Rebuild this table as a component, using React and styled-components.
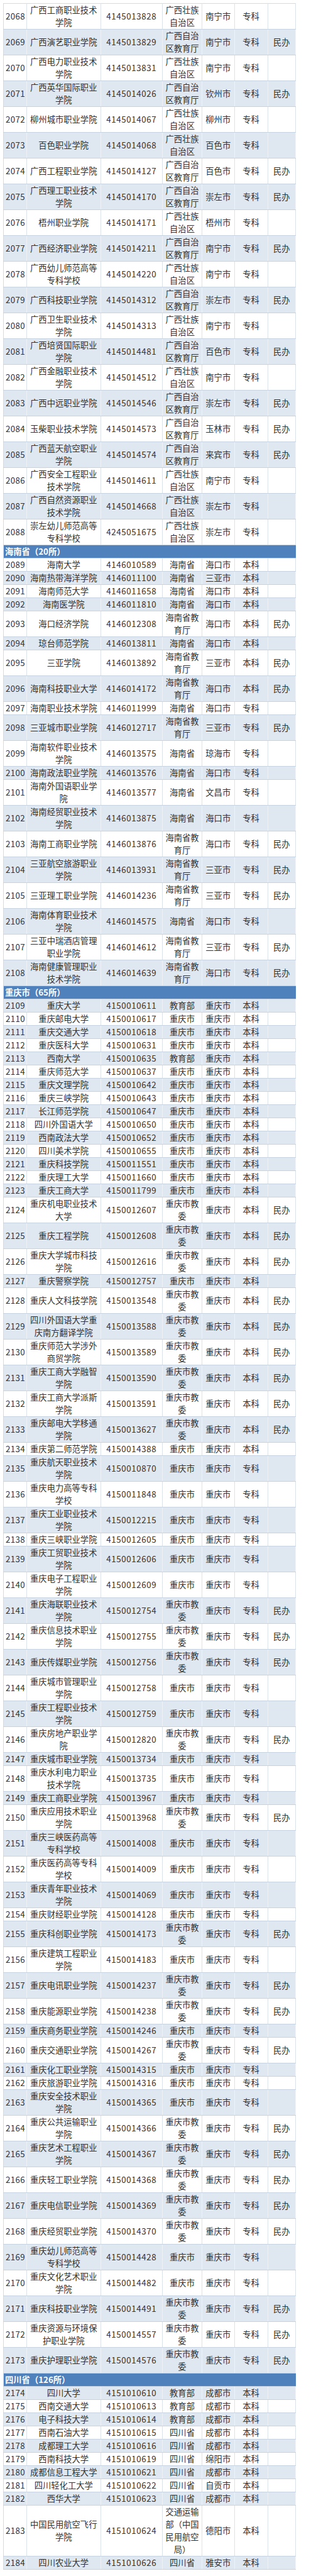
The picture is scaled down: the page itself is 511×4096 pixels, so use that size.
import React from 'react';
import styled, { createGlobalStyle } from 'styled-components';

const GlobalStyle = createGlobalStyle`
  body {
    margin: 0;
    background: #fff;
    font-family: "Noto Sans CJK SC", "Noto Sans", sans-serif;
  }
`

const Page = styled.div`
  padding: 5px 0 0 5px;
`

const Table = styled.table`
  border-collapse: collapse;
  table-layout: fixed;
  width: 465px;
  font-size: 13.3px;
  line-height: 20px;
  color: #333;
  border-top: 1px solid #d3dbe5;
  border-left: 1px solid #d3dbe5;
`

const Col = styled.col`
  width: ${p => p.$w}px;
`

const Row = styled.tr`
  background: #fff;

  &:nth-child(even) {
    background: #dfe7f1;
  }

  & > td {
    border-bottom: 1px solid #c7d3e1;
    border-right: 1px solid #dce2e9;
  }

  &:nth-child(even) > td {
    border-right-color: #eef2f7;
  }
`

const Cell = styled.td`
  padding: 0 4px;
  text-align: center;
  vertical-align: middle;
  letter-spacing: ${p => (p.$num ? '0.6px' : '0')};
`

const IndexCell = styled(Cell)`
  text-align: left;
  padding: 0 0 0 3px;
  letter-spacing: 0.4px;
`

const SectionRow = styled.tr`
  & > td {
    background: #4f81bd;
    color: #fff;
    font-weight: bold;
    text-align: left;
    padding: 0 0 0 2px;
    border-bottom: 1px solid #c7d3e1;
  }
`

const GX = '广西壮族自治区'
const GXJ = '广西自治区教育厅'
const HN = '海南省'
const HNJ = '海南省教育厅'
const CQ = '重庆市'
const CQJ = '重庆市教委'
const SC = '四川省'
const JYB = '教育部'

const sections = [
  {
    title: null,
    rows: [
      ['2068', '广西工商职业技术学院', '4145013828', GX, '南宁市', '专科', ''],
      ['2069', '广西演艺职业学院', '4145013829', GXJ, '南宁市', '专科', '民办'],
      ['2070', '广西电力职业技术学院', '4145013831', GX, '南宁市', '专科', ''],
      ['2071', '广西英华国际职业学院', '4145014026', GXJ, '钦州市', '专科', '民办'],
      ['2072', '柳州城市职业学院', '4145014067', GX, '柳州市', '专科', ''],
      ['2073', '百色职业学院', '4145014068', GX, '百色市', '专科', ''],
      ['2074', '广西工程职业学院', '4145014127', GXJ, '百色市', '专科', '民办'],
      ['2075', '广西理工职业技术学院', '4145014170', GXJ, '崇左市', '专科', '民办'],
      ['2076', '梧州职业学院', '4145014171', GX, '梧州市', '专科', ''],
      ['2077', '广西经济职业学院', '4145014211', GXJ, '南宁市', '专科', '民办'],
      ['2078', '广西幼儿师范高等专科学校', '4145014220', GX, '南宁市', '专科', ''],
      ['2079', '广西科技职业学院', '4145014312', GXJ, '崇左市', '专科', '民办'],
      ['2080', '广西卫生职业技术学院', '4145014313', GX, '南宁市', '专科', ''],
      ['2081', '广西培贤国际职业学院', '4145014481', GXJ, '百色市', '专科', '民办'],
      ['2082', '广西金融职业技术学院', '4145014512', GX, '南宁市', '专科', ''],
      ['2083', '广西中远职业学院', '4145014546', GXJ, '崇左市', '专科', '民办'],
      ['2084', '玉柴职业技术学院', '4145014573', GXJ, '玉林市', '专科', '民办'],
      ['2085', '广西蓝天航空职业学院', '4145014574', GXJ, '来宾市', '专科', '民办'],
      ['2086', '广西安全工程职业技术学院', '4145014611', GX, '南宁市', '专科', ''],
      ['2087', '广西自然资源职业技术学院', '4145014668', GX, '崇左市', '专科', ''],
      ['2088', '崇左幼儿师范高等专科学校', '4245051675', GX, '崇左市', '专科', ''],
    ],
  },
  {
    title: '海南省（20所）',
    rows: [
      ['2089', '海南大学', '4146010589', HN, '海口市', '本科', ''],
      ['2090', '海南热带海洋学院', '4146011100', HN, '三亚市', '本科', ''],
      ['2091', '海南师范大学', '4146011658', HN, '海口市', '本科', ''],
      ['2092', '海南医学院', '4146011810', HN, '海口市', '本科', ''],
      ['2093', '海口经济学院', '4146012308', HNJ, '海口市', '本科', '民办'],
      ['2094', '琼台师范学院', '4146013811', HN, '海口市', '本科', ''],
      ['2095', '三亚学院', '4146013892', HNJ, '三亚市', '本科', '民办'],
      ['2096', '海南科技职业大学', '4146014172', HNJ, '海口市', '本科', '民办'],
      ['2097', '海南职业技术学院', '4146011999', HN, '海口市', '专科', ''],
      ['2098', '三亚城市职业学院', '4146012717', HNJ, '三亚市', '专科', '民办'],
      ['2099', '海南软件职业技术学院', '4146013575', HN, '琼海市', '专科', ''],
      ['2100', '海南政法职业学院', '4146013576', HN, '海口市', '专科', ''],
      ['2101', '海南外国语职业学院', '4146013577', HN, '文昌市', '专科', ''],
      ['2102', '海南经贸职业技术学院', '4146013875', HN, '海口市', '专科', ''],
      ['2103', '海南工商职业学院', '4146013876', HNJ, '海口市', '专科', '民办'],
      ['2104', '三亚航空旅游职业学院', '4146013931', HNJ, '三亚市', '专科', '民办'],
      ['2105', '三亚理工职业学院', '4146014236', HNJ, '三亚市', '专科', '民办'],
      ['2106', '海南体育职业技术学院', '4146014575', HN, '海口市', '专科', ''],
      ['2107', '三亚中瑞酒店管理职业学院', '4146014612', HNJ, '三亚市', '专科', '民办'],
      ['2108', '海南健康管理职业技术学院', '4146014639', HNJ, '海口市', '专科', '民办'],
    ],
  },
  {
    title: '重庆市（65所）',
    rows: [
      ['2109', '重庆大学', '4150010611', JYB, CQ, '本科', ''],
      ['2110', '重庆邮电大学', '4150010617', CQ, CQ, '本科', ''],
      ['2111', '重庆交通大学', '4150010618', CQ, CQ, '本科', ''],
      ['2112', '重庆医科大学', '4150010631', CQ, CQ, '本科', ''],
      ['2113', '西南大学', '4150010635', JYB, CQ, '本科', ''],
      ['2114', '重庆师范大学', '4150010637', CQ, CQ, '本科', ''],
      ['2115', '重庆文理学院', '4150010642', CQ, CQ, '本科', ''],
      ['2116', '重庆三峡学院', '4150010643', CQ, CQ, '本科', ''],
      ['2117', '长江师范学院', '4150010647', CQ, CQ, '本科', ''],
      ['2118', '四川外国语大学', '4150010650', CQ, CQ, '本科', ''],
      ['2119', '西南政法大学', '4150010652', CQ, CQ, '本科', ''],
      ['2120', '四川美术学院', '4150010655', CQ, CQ, '本科', ''],
      ['2121', '重庆科技学院', '4150011551', CQ, CQ, '本科', ''],
      ['2122', '重庆理工大学', '4150011660', CQ, CQ, '本科', ''],
      ['2123', '重庆工商大学', '4150011799', CQ, CQ, '本科', ''],
      ['2124', '重庆机电职业技术大学', '4150012607', CQJ, CQ, '本科', '民办'],
      ['2125', '重庆工程学院', '4150012608', CQJ, CQ, '本科', '民办'],
      ['2126', '重庆大学城市科技学院', '4150012616', CQJ, CQ, '本科', '民办'],
      ['2127', '重庆警察学院', '4150012757', CQ, CQ, '本科', ''],
      ['2128', '重庆人文科技学院', '4150013548', CQJ, CQ, '本科', '民办'],
      ['2129', '四川外国语大学重庆南方翻译学院', '4150013588', CQJ, CQ, '本科', '民办'],
      ['2130', '重庆师范大学涉外商贸学院', '4150013589', CQJ, CQ, '本科', '民办'],
      ['2131', '重庆工商大学融智学院', '4150013590', CQJ, CQ, '本科', '民办'],
      ['2132', '重庆工商大学派斯学院', '4150013591', CQJ, CQ, '本科', '民办'],
      ['2133', '重庆邮电大学移通学院', '4150013627', CQJ, CQ, '本科', '民办'],
      ['2134', '重庆第二师范学院', '4150014388', CQ, CQ, '本科', ''],
      ['2135', '重庆航天职业技术学院', '4150010870', CQ, CQ, '专科', ''],
      ['2136', '重庆电力高等专科学校', '4150011848', CQ, CQ, '专科', ''],
      ['2137', '重庆工业职业技术学院', '4150012215', CQ, CQ, '专科', ''],
      ['2138', '重庆三峡职业学院', '4150012605', CQ, CQ, '专科', ''],
      ['2139', '重庆工贸职业技术学院', '4150012606', CQ, CQ, '专科', ''],
      ['2140', '重庆电子工程职业学院', '4150012609', CQ, CQ, '专科', ''],
      ['2141', '重庆海联职业技术学院', '4150012754', CQJ, CQ, '专科', '民办'],
      ['2142', '重庆信息技术职业学院', '4150012755', CQJ, CQ, '专科', '民办'],
      ['2143', '重庆传媒职业学院', '4150012756', CQJ, CQ, '专科', '民办'],
      ['2144', '重庆城市管理职业学院', '4150012758', CQ, CQ, '专科', ''],
      ['2145', '重庆工程职业技术学院', '4150012759', CQ, CQ, '专科', ''],
      ['2146', '重庆房地产职业学院', '4150012820', CQJ, CQ, '专科', '民办'],
      ['2147', '重庆城市职业学院', '4150013734', CQ, CQ, '专科', ''],
      ['2148', '重庆水利电力职业技术学院', '4150013735', CQ, CQ, '专科', ''],
      ['2149', '重庆工商职业学院', '4150013967', CQ, CQ, '专科', ''],
      ['2150', '重庆应用技术职业学院', '4150013968', CQJ, CQ, '专科', '民办'],
      ['2151', '重庆三峡医药高等专科学校', '4150014008', CQ, CQ, '专科', ''],
      ['2152', '重庆医药高等专科学校', '4150014009', CQ, CQ, '专科', ''],
      ['2153', '重庆青年职业技术学院', '4150014069', CQ, CQ, '专科', ''],
      ['2154', '重庆财经职业学院', '4150014128', CQ, CQ, '专科', ''],
      ['2155', '重庆科创职业学院', '4150014173', CQJ, CQ, '专科', '民办'],
      ['2156', '重庆建筑工程职业学院', '4150014183', CQ, CQ, '专科', ''],
      ['2157', '重庆电讯职业学院', '4150014237', CQJ, CQ, '专科', '民办'],
      ['2158', '重庆能源职业学院', '4150014238', CQJ, CQ, '专科', '民办'],
      ['2159', '重庆商务职业学院', '4150014246', CQ, CQ, '专科', ''],
      ['2160', '重庆交通职业学院', '4150014267', CQJ, CQ, '专科', '民办'],
      ['2161', '重庆化工职业学院', '4150014315', CQ, CQ, '专科', ''],
      ['2162', '重庆旅游职业学院', '4150014316', CQ, CQ, '专科', ''],
      ['2163', '重庆安全技术职业学院', '4150014365', CQ, CQ, '专科', ''],
      ['2164', '重庆公共运输职业学院', '4150014366', CQJ, CQ, '专科', '民办'],
      ['2165', '重庆艺术工程职业学院', '4150014367', CQJ, CQ, '专科', '民办'],
      ['2166', '重庆轻工职业学院', '4150014368', CQJ, CQ, '专科', '民办'],
      ['2167', '重庆电信职业学院', '4150014369', CQJ, CQ, '专科', '民办'],
      ['2168', '重庆经贸职业学院', '4150014370', CQJ, CQ, '专科', '民办'],
      ['2169', '重庆幼儿师范高等专科学校', '4150014428', CQ, CQ, '专科', ''],
      ['2170', '重庆文化艺术职业学院', '4150014482', CQ, CQ, '专科', ''],
      ['2171', '重庆科技职业学院', '4150014491', CQJ, CQ, '专科', '民办'],
      ['2172', '重庆资源与环境保护职业学院', '4150014557', CQJ, CQ, '专科', '民办'],
      ['2173', '重庆护理职业学院', '4150014576', CQJ, CQ, '专科', '民办'],
    ],
  },
  {
    title: '四川省（126所）',
    rows: [
      ['2174', '四川大学', '4151010610', JYB, '成都市', '本科', ''],
      ['2175', '西南交通大学', '4151010613', JYB, '成都市', '本科', ''],
      ['2176', '电子科技大学', '4151010614', JYB, '成都市', '本科', ''],
      ['2177', '西南石油大学', '4151010615', SC, '成都市', '本科', ''],
      ['2178', '成都理工大学', '4151010616', SC, '成都市', '本科', ''],
      ['2179', '西南科技大学', '4151010619', SC, '绵阳市', '本科', ''],
      ['2180', '成都信息工程大学', '4151010621', SC, '成都市', '本科', ''],
      ['2181', '四川轻化工大学', '4151010622', SC, '自贡市', '本科', ''],
      ['2182', '西华大学', '4151010623', SC, '成都市', '本科', ''],
      ['2183', '中国民用航空飞行学院', '4151010624', '交通运输部（中国民用航空局）', '德阳市', '本科', ''],
      ['2184', '四川农业大学', '4151010626', SC, '雅安市', '本科', ''],
    ],
  },
]

const widths = [37, 117.5, 98.5, 63, 51.5, 53, 44.5]

function SchoolRow({ row }) {
  const [no, name, code, dept, city, level, note] = row
  return (
    <Row>
      <IndexCell>{no}</IndexCell>
      <Cell>{name}</Cell>
      <Cell $num>{code}</Cell>
      <Cell>{dept}</Cell>
      <Cell>{city}</Cell>
      <Cell>{level}</Cell>
      <Cell>{note}</Cell>
    </Row>
  )
}

function App() {
  return (
    <Page>
      <GlobalStyle />
      <Table>
        <colgroup>
          {widths.map((w, i) => <Col key={i} $w={w} />)}
        </colgroup>
        <tbody>
          {sections.map(section => (
            <React.Fragment key={section.rows[0][0]}>
              {section.title && (
                <SectionRow>
                  <td colSpan={7}>{section.title}</td>
                </SectionRow>
              )}
              {section.rows.map(row => <SchoolRow key={row[0]} row={row} />)}
            </React.Fragment>
          ))}
        </tbody>
      </Table>
    </Page>
  );
}

export default App;
